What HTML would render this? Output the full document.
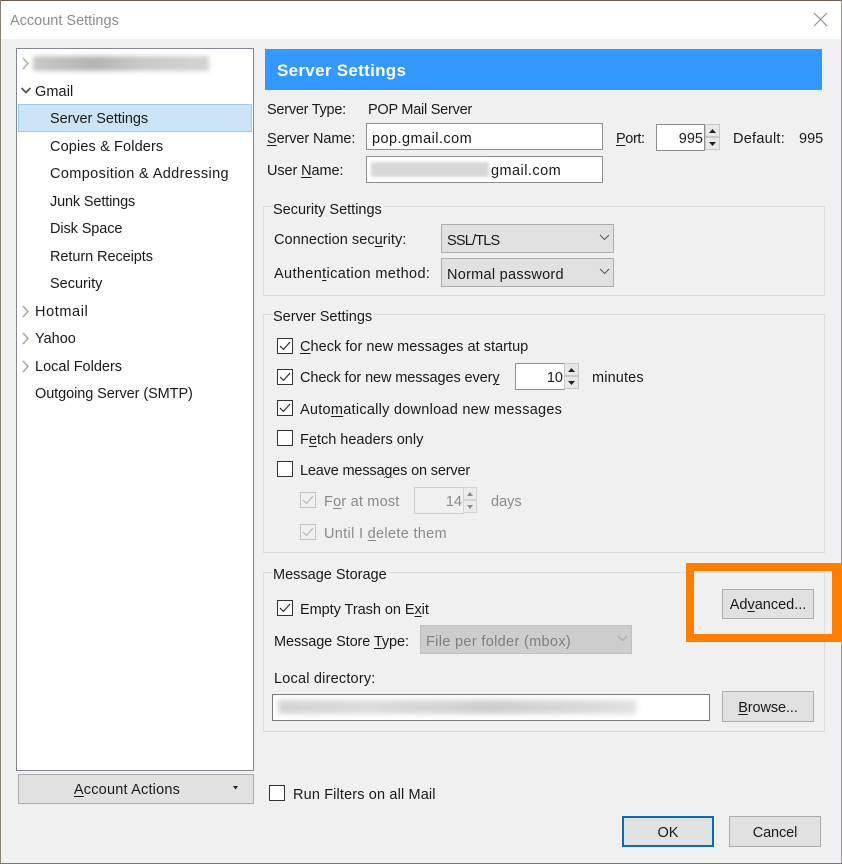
<!DOCTYPE html>
<html><head><meta charset="utf-8"><style>
html,body{margin:0;padding:0;background:#fff}
#p{position:relative;width:842px;height:864px;overflow:hidden;background:#f0f0f0;font-family:"Liberation Sans",sans-serif;font-size:14.5px;color:#1a1a1a}
#p div,#p span.a{position:absolute;box-sizing:border-box}
.t{white-space:nowrap;line-height:20px;height:20px;margin-top:1px}
.g{color:#8a8a8a}
.in{background:#fff;border:1px solid #8f8f8f}
.btn{background:#e1e1e1;border:1px solid #adadad;text-align:center;margin-top:0}
.sel{background:#e1e1e1;border:1px solid #adadad}
.fs{border:1px solid #dcdcdc}
.lg{background:#f0f0f0;padding:0 2px 0 1px}
.cb{width:16px;height:16px;border:1px solid #333;background:#fff}
.cb.d{border-color:#c4c4c4;background:#f0f0f0}
svg{position:absolute;overflow:visible}
u{text-decoration-thickness:1px;text-underline-offset:2px}
</style></head><body><div id="p">
<!-- window frame -->
<div style="left:0;top:0;width:842px;height:39px;background:#fff"></div>
<div style="left:0;top:0;width:842px;height:1px;background:#6b5f52"></div>
<div style="left:0;top:0;width:1px;height:864px;background:#8a8178"></div>
<div style="left:841px;top:0;width:1px;height:864px;background:#a09a92"></div>
<div style="left:0;top:863px;width:842px;height:1px;background:#777"></div>
<div class="t" style="left:10px;top:10px;color:#8c8c8c;font-size:14.5px">Account Settings</div>
<svg style="left:813px;top:12px" width="15" height="15"><path d="M1 1L14 14M14 1L1 14" stroke="#8a8a8a" stroke-width="1" fill="none"/></svg>

<!-- tree -->
<div style="left:16px;top:48px;width:238px;height:723px;background:#fff;border:1px solid #828790"></div>
<div style="left:33px;top:56px;width:176px;height:15px;background:linear-gradient(90deg,#c8c8c8,#b4b4b4 35%,#c8c8c8 60%,#d4d4d4);filter:blur(2.500px)"></div>
<svg style="left:21px;top:57px" width="9" height="13"><path d="M2 1L7 6.500L2 12" stroke="#b0b0b0" stroke-width="1.500" fill="none"/></svg>
<svg style="left:20px;top:87px" width="12" height="8"><path d="M1.500 1L6 5.500L10.500 1" stroke="#555" stroke-width="1.800" fill="none"/></svg>
<div class="t" style="left:35px;top:81px;letter-spacing:.1px">Gmail</div>
<div style="left:18px;top:104px;width:234px;height:28px;background:#cce4f7;border:1px solid #9fcdf0"></div>
<div class="t" style="left:50px;top:108px;letter-spacing:-.07px">Server Settings</div>
<div class="t" style="left:50px;top:136px;letter-spacing:.13px">Copies &amp; Folders</div>
<div class="t" style="left:50px;top:163px;letter-spacing:.37px">Composition &amp; Addressing</div>
<div class="t" style="left:50px;top:191px;letter-spacing:-.15px">Junk Settings</div>
<div class="t" style="left:50px;top:218px;letter-spacing:-.1px">Disk Space</div>
<div class="t" style="left:50px;top:246px;letter-spacing:-.07px">Return Receipts</div>
<div class="t" style="left:50px;top:273px">Security</div>
<svg style="left:21px;top:305px" width="9" height="13"><path d="M2 1L7 6.500L2 12" stroke="#a6a6a6" stroke-width="1.500" fill="none"/></svg>
<div class="t" style="left:35px;top:301px;letter-spacing:.6px">Hotmail</div>
<svg style="left:21px;top:332px" width="9" height="13"><path d="M2 1L7 6.500L2 12" stroke="#a6a6a6" stroke-width="1.500" fill="none"/></svg>
<div class="t" style="left:35px;top:328px">Yahoo</div>
<svg style="left:21px;top:360px" width="9" height="13"><path d="M2 1L7 6.500L2 12" stroke="#a6a6a6" stroke-width="1.500" fill="none"/></svg>
<div class="t" style="left:35px;top:356px">Local Folders</div>
<div class="t" style="left:35px;top:383px;letter-spacing:-.08px">Outgoing Server (SMTP)</div>

<!-- header -->
<div style="left:265px;top:49px;width:557px;height:41px;background:#3399ff;border:1px solid #7a8794"></div>
<div class="t" style="left:277px;top:60px;color:#fff;font-weight:bold;font-size:17px;letter-spacing:.3px">Server Settings</div>

<div class="t" style="left:267px;top:99px;letter-spacing:-.25px">Server Type:</div>
<div class="t" style="left:368px;top:99px;letter-spacing:-.25px">POP Mail Server</div>
<div class="t" style="left:267px;top:128px;letter-spacing:-.1px"><u>S</u>erver Name:</div>
<div class="in" style="left:366px;top:123px;width:237px;height:27px"></div>
<div class="t" style="left:372px;top:128px;letter-spacing:.45px">pop.gmail.com</div>
<div class="t" style="left:616px;top:128px;letter-spacing:-.4px"><u>P</u>ort:</div>
<div class="in" style="left:656px;top:124px;width:49px;height:27px"></div>
<div class="t" style="left:656px;top:128px;width:47px;text-align:right">995</div>
<div style="left:705px;top:124px;width:15px;height:13px;background:#e8e8e8;border:1px solid #c8c8c8"></div>
<div style="left:705px;top:137px;width:15px;height:13px;background:#e8e8e8;border:1px solid #c8c8c8"></div>
<svg style="left:705px;top:124px" width="15" height="27"><path d="M4 9L7.500 5L11 9ZM4 18L11 18L7.500 22Z" fill="#222"/></svg>
<div class="t" style="left:733px;top:128px;letter-spacing:.25px">Default:</div>
<div class="t" style="left:799px;top:128px">995</div>
<div class="t" style="left:267px;top:160px;letter-spacing:-.1px">User <u>N</u>ame:</div>
<div class="in" style="left:366px;top:156px;width:237px;height:27px"></div>
<div style="left:371px;top:162px;width:118px;height:15px;background:#d8d8d8;filter:blur(1.500px)"></div>
<div class="t" style="left:491px;top:160px;letter-spacing:.45px">gmail.com</div>

<!-- security -->
<div class="fs" style="left:263px;top:206px;width:562px;height:90px"></div>
<div class="t lg" style="left:272px;top:199px">Security Settings</div>
<div class="t" style="left:274px;top:229px;letter-spacing:.05px">Connection sec<u>u</u>rity:</div>
<div class="sel" style="left:441px;top:224px;width:173px;height:29px"></div>
<div class="t" style="left:447px;top:230px;letter-spacing:-.8px">SSL/TLS</div>
<svg style="left:599px;top:234px" width="11" height="7"><path d="M1 1L5.500 5.500L10 1" stroke="#555" fill="none"/></svg>
<div class="t" style="left:274px;top:263px;letter-spacing:.36px">Authen<u>t</u>ication method:</div>
<div class="sel" style="left:441px;top:258px;width:173px;height:29px"></div>
<div class="t" style="left:447px;top:264px;letter-spacing:.27px">Normal password</div>
<svg style="left:599px;top:268px" width="11" height="7"><path d="M1 1L5.500 5.500L10 1" stroke="#555" fill="none"/></svg>

<!-- server settings -->
<div class="fs" style="left:263px;top:314px;width:562px;height:239px"></div>
<div class="t lg" style="left:272px;top:306px">Server Settings</div>

<div class="cb" style="left:277px;top:338px"></div>
<svg style="left:277px;top:338px" width="16" height="16"><path d="M3 8L6.500 11.500L13 4" stroke="#222" stroke-width="1.100" fill="none"/></svg>
<div class="t" style="left:300px;top:336px;letter-spacing:.03px"><u>C</u>heck for new messages at startup</div>

<div class="cb" style="left:277px;top:369px"></div>
<svg style="left:277px;top:369px" width="16" height="16"><path d="M3 8L6.500 11.500L13 4" stroke="#222" stroke-width="1.100" fill="none"/></svg>
<div class="t" style="left:300px;top:367px;letter-spacing:-.1px">Check for new messages ever<u>y</u></div>
<div class="in" style="left:515px;top:363px;width:50px;height:27px"></div>
<div class="t" style="left:515px;top:367px;width:48px;text-align:right">10</div>
<div style="left:564px;top:363px;width:15px;height:13px;background:#e8e8e8;border:1px solid #c8c8c8"></div>
<div style="left:564px;top:376px;width:15px;height:13px;background:#e8e8e8;border:1px solid #c8c8c8"></div>
<svg style="left:564px;top:363px" width="15" height="27"><path d="M4 9L7.500 5L11 9ZM4 18L11 18L7.500 22Z" fill="#222"/></svg>
<div class="t" style="left:592px;top:367px;letter-spacing:.14px">minutes</div>

<div class="cb" style="left:277px;top:400px"></div>
<svg style="left:277px;top:400px" width="16" height="16"><path d="M3 8L6.500 11.500L13 4" stroke="#222" stroke-width="1.100" fill="none"/></svg>
<div class="t" style="left:300px;top:399px;letter-spacing:.26px">Auto<u>m</u>atically download new messages</div>

<div class="cb" style="left:277px;top:430px"></div>
<div class="t" style="left:300px;top:429px">F<u>e</u>tch headers only</div>

<div class="cb" style="left:277px;top:461px"></div>
<div class="t" style="left:300px;top:460px;letter-spacing:-.17px">Leave messa<u>g</u>es on server</div>

<div class="cb d" style="left:300px;top:492px"></div>
<svg style="left:300px;top:492px" width="16" height="16"><path d="M3 8L6.500 11.500L13 4" stroke="#b5b5b5" stroke-width="1.100" fill="none"/></svg>
<div class="t g" style="left:324px;top:491px;letter-spacing:.2px">F<u>o</u>r at most</div>
<div style="left:414px;top:487px;width:50px;height:27px;border:1px solid #cfcfcf"></div>
<div class="t g" style="left:414px;top:491px;width:48px;text-align:right">14</div>
<div style="left:463px;top:487px;width:14px;height:13px;background:#ececec;border:1px solid #d4d4d4"></div>
<div style="left:463px;top:500px;width:14px;height:13px;background:#ececec;border:1px solid #d4d4d4"></div>
<svg style="left:463px;top:487px" width="14" height="27"><path d="M4 9L7 5L10 9ZM4 18L10 18L7 22Z" fill="#8a8a8a"/></svg>
<div class="t g" style="left:491px;top:491px">days</div>

<div class="cb d" style="left:300px;top:524px"></div>
<svg style="left:300px;top:524px" width="16" height="16"><path d="M3 8L6.500 11.500L13 4" stroke="#b5b5b5" stroke-width="1.100" fill="none"/></svg>
<div class="t g" style="left:324px;top:523px;letter-spacing:.32px">Until I <u>d</u>elete them</div>

<!-- message storage -->
<div class="fs" style="left:263px;top:572px;width:562px;height:160px"></div>
<div class="t lg" style="left:272px;top:564px">Message Storage</div>
<div class="cb" style="left:277px;top:600px"></div>
<svg style="left:277px;top:600px" width="16" height="16"><path d="M3 8L6.500 11.500L13 4" stroke="#222" stroke-width="1.100" fill="none"/></svg>
<div class="t" style="left:300px;top:599px;letter-spacing:-.05px">Empty Trash on E<u>x</u>it</div>
<div class="t" style="left:274px;top:631px;letter-spacing:-.1px">Message Store <u>T</u>ype:</div>
<div style="left:420px;top:625px;width:212px;height:29px;background:#cdcdcd;border:1px solid #c0c0c0"></div>
<div class="t" style="left:426px;top:631px;color:#808080;letter-spacing:.33px">File per folder (mbox)</div>
<svg style="left:617px;top:635px" width="11" height="7"><path d="M1 1L5.500 5.500L10 1" stroke="#a8a8a8" fill="none"/></svg>
<div class="t" style="left:274px;top:668px;letter-spacing:.2px">Local directory:</div>
<div class="in" style="left:272px;top:694px;width:438px;height:27px;border-color:#7a7a7a"></div>
<div style="left:278px;top:700px;width:358px;height:14px;background:linear-gradient(90deg,#d2d2d2,#dcdcdc 25%,#cdcdcd 60%,#e0e0e0);filter:blur(3px)"></div>
<div class="btn t" style="left:722px;top:691px;width:92px;height:31px;line-height:32px;letter-spacing:-.1px"><u>B</u>rowse...</div>
<div class="btn t" style="left:722px;top:589px;width:92px;height:30px;line-height:31px">Ad<u>v</u>anced...</div>
<div style="left:686px;top:563px;width:156px;height:79px;border:8px solid #ff8000;border-right-width:10px"></div>

<!-- bottom -->
<div class="btn t" style="left:18px;top:774px;width:236px;height:30px;line-height:31px;padding-right:18px;letter-spacing:.2px"><u>A</u>ccount Actions</div>
<svg style="left:233px;top:786px" width="6" height="4"><path d="M0 0L5 0L2.500 3.500Z" fill="#222"/></svg>
<div class="cb" style="left:269px;top:785px"></div>
<div class="t" style="left:293px;top:784px;letter-spacing:.14px">Run Filters on all Mail</div>
<div class="btn t" style="left:622px;top:816px;width:92px;height:31px;line-height:31px;border:2px solid #0a6cb5">OK</div>
<div class="btn t" style="left:729px;top:816px;width:92px;height:31px;line-height:33px;letter-spacing:-.1px">Cancel</div>
</div></body></html>
